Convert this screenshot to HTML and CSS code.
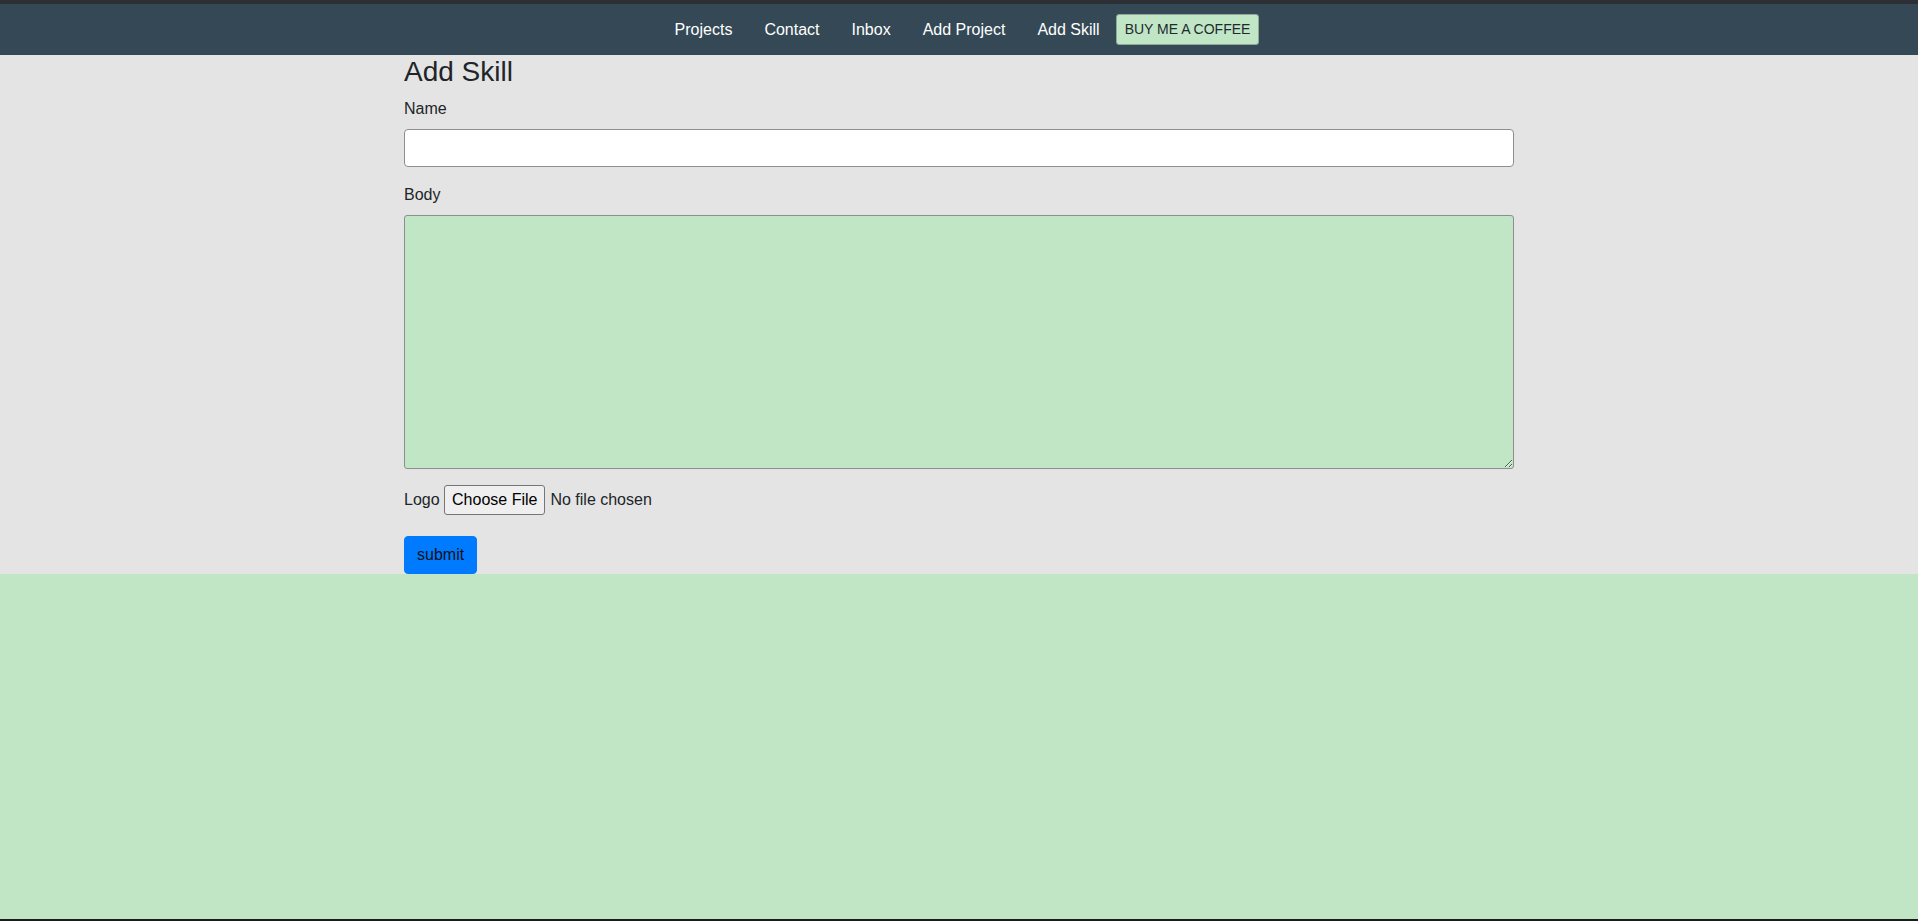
FILE: index.html
```html
<!DOCTYPE html>
<html lang="en">
<head>
<meta charset="utf-8">
<title>Add Skill</title>
<link rel="stylesheet" href="styles.css">
</head>
<body>
<header class="topnav">
  <a class="nav-link" href="#">Projects</a>
  <a class="nav-link" href="#">Contact</a>
  <a class="nav-link" href="#">Inbox</a>
  <a class="nav-link" href="#">Add Project</a>
  <a class="nav-link" href="#">Add Skill</a>
  <a class="coffee" href="#">BUY ME A COFFEE</a>
</header>
<main class="page">
  <div class="container">
    <h3 class="title">Add Skill</h3>
    <form class="skill-form">
      <div class="form-group">
        <label class="label" for="name">Name</label>
        <input class="form-control" id="name" type="text">
      </div>
      <div class="form-group">
        <label class="label" for="body">Body</label>
        <textarea class="form-control textarea" id="body" rows="10"></textarea>
      </div>
      <div class="form-group">
        <label class="label" for="logo">Logo</label>
        <input class="file" id="logo" type="file">
      </div>
      <button class="btn-submit" type="button">submit</button>
    </form>
  </div>
</main>
</body>
</html>
```
FILE: styles.css
```css
* { box-sizing: border-box; }
html, body { margin: 0; padding: 0; }
body {
  font-family: "Liberation Sans", Arial, sans-serif;
  font-size: 16px;
  line-height: 1.5;
  color: #212529;
  background: #c1e6c6;
  min-height: 100vh;
  border-bottom: 2px solid #1c1c1c;
}
.topnav {
  border-top: 4px solid #2c3034;
  background: #344955;
  height: 55px;
  display: flex;
  justify-content: center;
  align-items: center;
}
.nav-link {
  color: #fff;
  text-decoration: none;
  padding: 0 16px;
  font-size: 16px;
  line-height: 24px;
}
.coffee {
  display: flex;
  align-items: center;
  height: 31px;
  padding: 0 8px;
  background: #c1e6c6;
  border: 1px solid #8fa898;
  border-radius: 3px;
  color: #1f2a2e;
  font-size: 14px;
  text-decoration: none;
}
.page {
  background: #e4e4e4;
}
.container {
  width: 1140px;
  margin: 0 auto;
  padding: 0 15px;
}
.title {
  margin: 0 0 8px;
  font-size: 28px;
  font-weight: 400;
  line-height: 1.2;
}
.skill-form { margin: 0; }
.form-group { margin-bottom: 16px; }
.label {
  display: inline-block;
  margin-bottom: 8px;
}
.form-control {
  display: block;
  width: 100%;
  margin: 0;
  padding: 6px 12px;
  font: inherit;
  height: 38px;
  background: #fff;
  border: 1px solid #8e8e8e;
  border-radius: 4px;
  color: #495057;
}
.textarea {
  height: auto;
  background: #c1e6c6;
  resize: vertical;
  border-radius: 3px;
}
.file {
  font: inherit;
  line-height: 1.5;
  margin: 0;
}
.file::file-selector-button {
  font: inherit;
  padding: 2px 7px;
  margin-right: 5px;
  border: 1px solid #767676;
  border-radius: 3px;
  background: #efefef;
  color: #000;
}
.btn-submit {
  display: block;
  margin: 0;
  height: 38px;
  padding: 6px 12px;
  font: inherit;
  color: #111;
  background: #007bff;
  border: 1px solid #007bff;
  border-radius: 4px;
}
```
